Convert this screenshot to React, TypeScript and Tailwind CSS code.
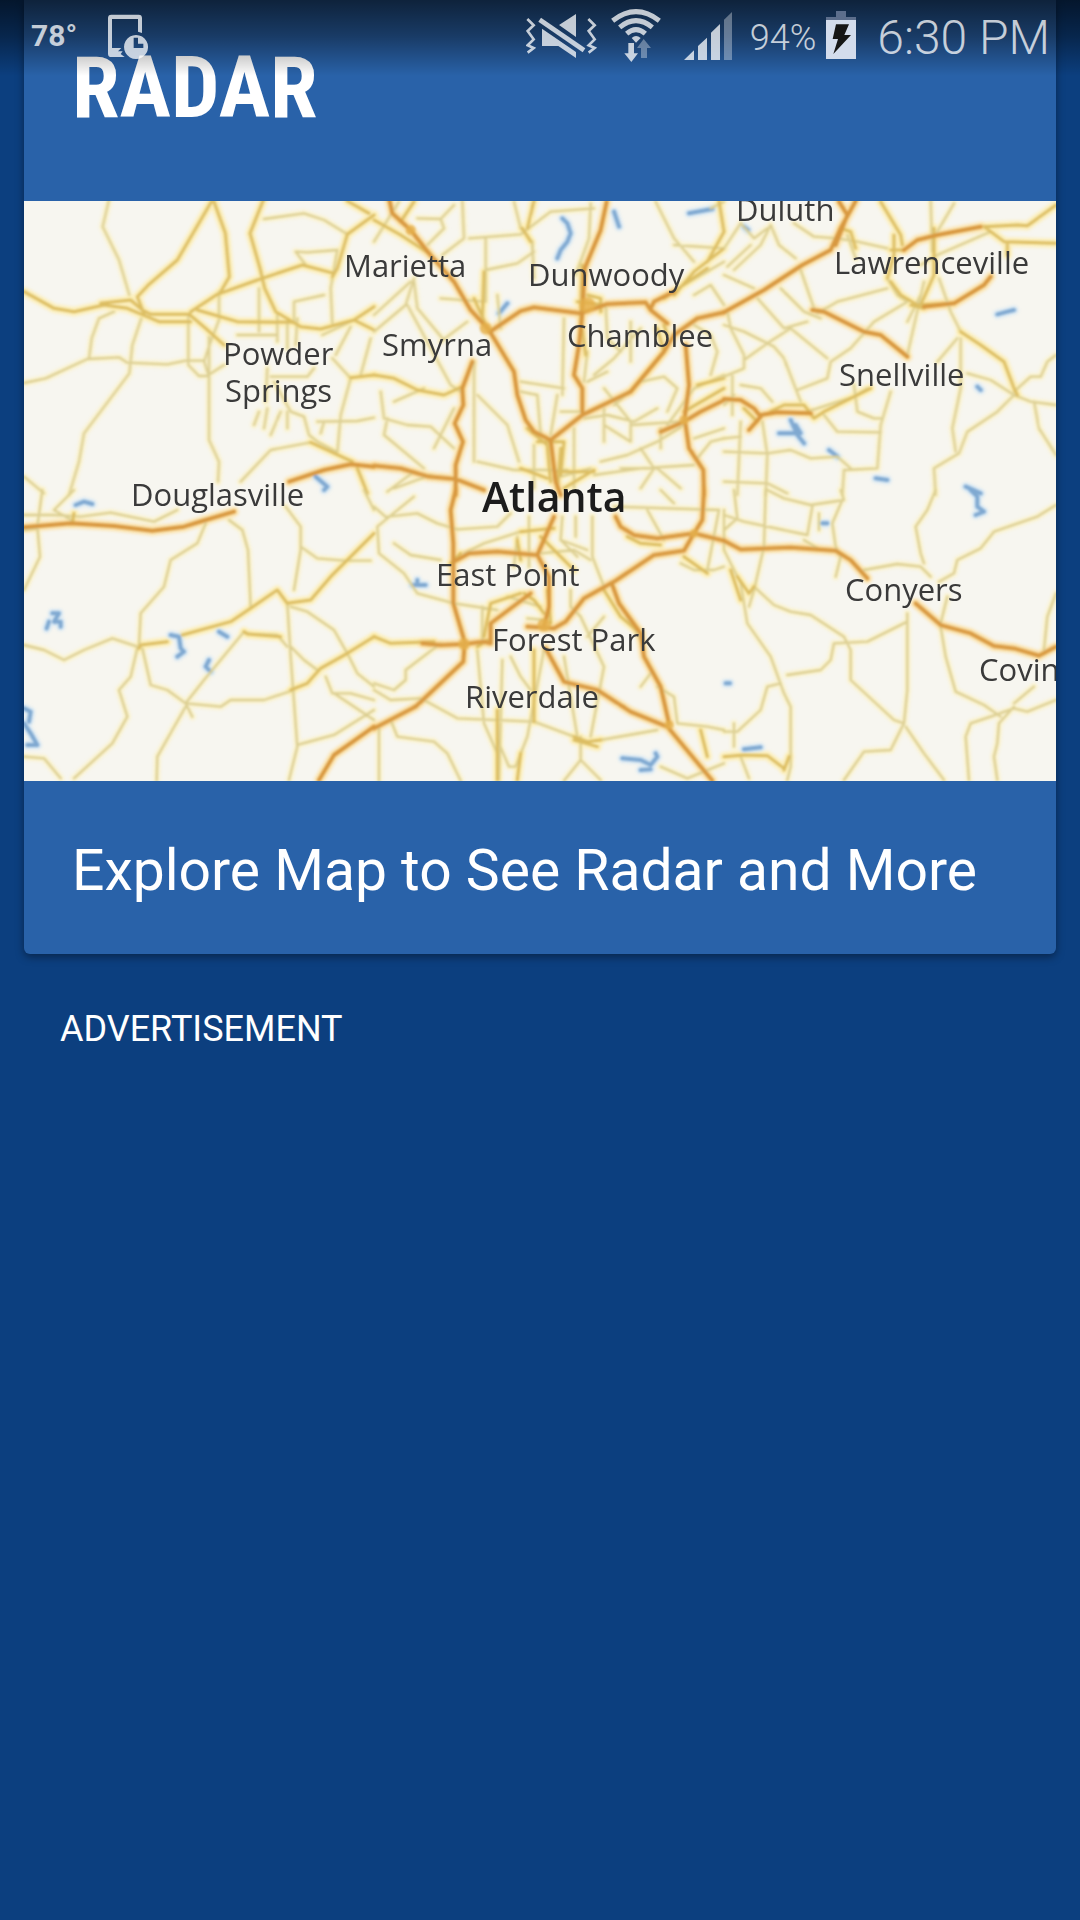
import React from "react";

const LIGHT = "#dccf92";
const GOLD = "#dcbd62";
const MAJOR = "#d8983f";
const WATER = "#7fa8d0";

type Tile = {
  x: number;
  y: number;
  light: string[];
  gold: string[];
  major: string[];
  water: string[];
};

const tiles: Tile[] = [
  {
    x: 0,
    y: 0,
    light: [
      "M256 10L236 95L285 195L316 300",
      "M0 564L65 550L190 492L285 487L310 503L430 508L485 497H540L553 540L600 510",
      "M270 350L225 370L203 430L195 490",
      "M352 370L325 450L316 535L180 715L165 800L135 900",
      "M555 425V735L585 800L582 860",
      "M493 360V510L525 543H555",
      "M720 72L840 55L900 75L970 118",
      "M815 170L850 172L940 165M815 170L845 210",
      "M705 280V410M760 360V440M790 370V460M820 370L815 450",
      "M810 385V320L900 300M640 420H760",
      "M0 845L60 895M650 860L740 765L860 742",
      "M840 665L855 720L880 740L940 772",
      "M940 165L920 280L925 385M895 420L990 375",
      "M925 490L980 550L950 660L940 772M880 680L1000 678L1050 668",
      "M730 640L720 700M705 650L690 690M770 650L740 720M790 650V700M730 520L725 620",
      "M740 545H850L870 520M750 560L800 650L840 665M900 680L890 715",
      "M980 395L935 480M1040 430L1010 540",
      "M585 375L560 440L540 500M585 290V370",
    ],
    gold: [
      "M562 20L460 195L375 268L340 305L362 362",
      "M570 20L604 115L616 245L590 290",
      "M718 15L678 115L708 220L722 280L755 350L830 395L890 402L990 375L1050 405",
      "M970 18L1035 55M1050 60L970 118L940 220L925 245",
      "M0 290L90 340L150 350L240 330L310 340L405 380H500",
      "M230 325L320 315L355 345L380 358H498",
      "M500 350L580 298L700 255L835 210L930 235",
      "M498 360L545 400L600 450M520 345L640 380L810 382",
      "M980 548L1050 540M990 375L1050 335",
      "M1000 820L1030 895M860 742L985 800",
    ],
    major: ["M795 860L900 825L980 808L1050 815"],
    water: ["M875 845L910 875L900 885"],
  },
  {
    x: 1050,
    y: 0,
    light: [
      "M265 18L270 130L205 180M0 140L75 20",
      "M130 70L200 72L240 30M160 150L210 100L200 72",
      "M285 130L440 118L530 50M420 20L440 100L475 140L480 250",
      "M335 130V320M335 225L430 205L480 170",
      "M530 50L660 40M650 25L645 130L605 240",
      "M845 20L900 130L960 200M900 150L1050 160M1010 40L1050 20",
      "M0 360L110 260M0 410L95 330L120 250M120 260L130 340L205 430",
      "M200 310L330 320M200 440L280 380M100 330L230 570L260 590",
      "M60 620L150 580M20 590L30 670L100 690L170 695L240 760",
      "M40 670L30 720L150 820M240 640L180 760",
      "M310 600L400 690L435 800M300 500V800M310 800L420 825H580",
      "M440 590L490 600L500 720M550 600L530 720M440 560L570 580",
      "M570 370L565 600M640 470L630 560M640 560L700 530M695 330L700 430L740 470",
      "M660 540L720 490L800 400M770 380V500",
      "M630 670L700 660L780 680L850 640M690 580L770 680L770 740L690 690M690 640V740",
      "M720 630L800 560L870 545L910 580L880 650M770 690L920 680",
      "M680 800L760 780L850 740L930 690M660 840L800 820L960 810",
      "M740 820L850 820L920 880M800 760L840 820L800 880",
      "M960 390L1010 420L1030 470L1010 540M1050 540L960 580L880 690",
      "M960 730L1050 700M970 790L1010 740L1050 730M860 700V760",
      "M560 650H620M540 850L650 820M600 700V880M480 750V880",
      "M930 270L1050 200M960 300L1010 270L1050 330",
      "M370 300L380 400M60 880L170 840M40 890L120 830",
    ],
    gold: [
      "M0 75L80 120L165 175M120 20L80 80",
      "M480 18L460 100M445 100L470 140",
      "M0 540L60 550L130 585L210 600L265 575",
      "M900 300L960 230L1050 160M870 310L1000 220",
      "M1035 18L1050 110L1000 200",
      "M300 310L340 400M330 230L325 370",
      "M625 210L620 370L635 480M640 300L680 310L680 350M610 320L690 330",
      "M850 400L870 470L770 590M870 390L880 420",
      "M460 700L520 750L530 860M490 740H570L560 840M560 760L550 880",
      "M970 570L1050 550M930 650L1050 580",
      "M440 820L520 850M550 830L660 830M570 880L660 825",
    ],
    major: [
      "M45 10L55 55L110 105L165 175L240 260L290 345L345 405L420 530L430 600L455 675L480 710L530 735L545 860L560 900",
      "M345 412L440 348L480 337L620 355L700 327L815 322L830 345L880 385",
      "M698 20L680 105L632 220L625 355L615 450L600 540L625 580V650",
      "M530 735L625 660L770 590L870 470L900 420L970 370L1050 352",
      "M295 500L265 580L268 630L242 685L267 740L245 810V900",
      "M0 812L80 820L165 845L245 852L330 885",
      "M935 450L945 570L932 670L945 760L988 825L990 900",
      "M860 710L930 680L980 650L1050 615M830 340L840 320L900 290",
    ],
    water: [
      "M565 70L580 85L590 115L580 140L560 165L550 190",
      "M720 50L735 95M945 55L1015 42M375 355L400 325",
    ],
  },
  {
    x: 2100,
    y: 0,
    light: [
      "M140 90L165 150L215 190M50 85L90 130L130 100M0 160L50 85",
      "M210 85L270 125L340 130L400 140L490 160",
      "M370 120L395 190M230 225L270 340M0 240L90 280",
      "M100 310L180 400L250 380M170 280L240 350L290 370",
      "M280 355L340 320L490 280M490 250L520 300L550 320L450 380L380 460L320 500L310 550L220 585",
      "M0 390L60 410L150 455L180 490L230 620",
      "M10 350L20 400L60 480L60 520L0 545M25 540V660",
      "M60 495L130 445L200 400L310 490",
      "M600 260L550 480M645 250L680 350L710 410",
      "M700 430L640 500M710 430V580L685 700L695 770",
      "M730 535L800 555L870 600M870 600L820 650L730 710L705 775L630 820L635 900",
      "M870 590L920 545L950 545L970 500L996 480M870 600L920 620L996 630",
      "M930 620L945 700L996 780M390 570L400 650L450 670H470",
      "M500 590L470 690L460 820L360 825L355 900",
      "M300 660L340 710L470 712M0 770L130 775L200 765L260 790L340 785L380 820",
      "M50 680L40 900M115 680L130 780L125 900M0 860L130 865L190 895",
      "M50 570L110 580L145 620M250 650L390 605L430 580M620 18L625 170",
      "M690 25L640 110M590 210L640 180L800 110M0 730L50 725",
      "M30 225L110 150L140 90M10 215L80 150M550 380L590 300M0 630L30 600",
    ],
    gold: [
      "M470 20L530 120L535 150M510 120L510 180L490 250",
      "M780 95L840 140L996 145M850 145V180",
      "M780 95L880 90L910 92L996 30",
      "M710 410L770 450L840 500L870 580L880 600",
      "M500 260L530 300L580 330L690 325",
      "M350 100L380 110L395 160M630 100V240L590 330",
      "M60 640L100 680M140 650L180 630H240L270 670L300 650L440 580",
      "M560 330L600 340M500 165H540",
    ],
    major: [
      "M395 18L350 100L320 165L235 210L120 285L0 352",
      "M345 20L370 60L335 150",
      "M540 165L580 135L640 120L770 95",
      "M800 245L780 270L690 325L600 335",
      "M265 345L300 350L420 410L470 420L550 485",
      "M0 612L50 615L90 640L110 665L75 705M110 660L160 652L260 655",
    ],
    water: [
      "M200 675L220 720L240 745M165 715L230 715L215 690",
      "M820 358L850 350L870 345M315 765L340 785M455 850L490 855",
      "M725 875L770 895M760 575L770 585M60 95L72 105",
    ],
  },
  {
    x: 0,
    y: 885,
    light: [
      "M55 0L40 110L48 200L0 300M150 0L90 60L150 95",
      "M0 75H90L170 80L260 68L390 95L460 60",
      "M545 100L520 160L440 210L420 290L350 370L345 470",
      "M615 90L655 120L672 180L680 350",
      "M785 50L830 110V180L810 300M830 170L880 205L960 212H1040",
      "M0 465L60 480L120 510L180 480L265 445L340 470",
      "M340 475L320 560L285 600L310 680L265 760L150 865",
      "M355 475L380 585L430 600L485 640L590 650L620 630L720 630L810 600",
      "M485 640L540 570L660 425L680 432L760 435L790 470",
      "M485 650L445 720L400 800L398 872M485 640L505 680",
      "M790 340L800 500L820 770L795 870",
      "M800 350L850 365L930 420L970 490L1000 550L1050 590",
      "M800 470L840 510L880 540M905 560L925 610L980 610L1050 630",
      "M820 765L930 735L1050 660M930 610L1050 690M0 800L60 805L110 865",
      "M1020 0L1050 60M0 120L40 115",
    ],
    gold: [
      "M475 435L620 395L680 355L760 300L790 340L860 330L920 260L1050 130",
      "M800 600L850 580L890 535L970 490L1050 440",
      "M345 475L350 465L430 455M660 425L670 432L770 440",
      "M150 70L145 100",
    ],
    major: [
      "M0 112L140 100L270 108L385 122L480 110L545 90L630 65",
      "M885 870L930 795L1050 710",
    ],
    water: [
      "M85 370H105L90 395H110V410M75 395L68 415",
      "M440 435L465 440L470 475L480 485L460 500",
      "M0 655L20 665L15 695M0 700L20 730L40 765H10",
      "M555 510L545 530L560 545M155 45L180 35L205 42M585 425L610 440",
    ],
  },
  {
    x: 1050,
    y: 885,
    light: [
      "M0 50L40 85L10 110L15 190L90 250L130 310L240 340L370 360",
      "M40 85L120 20M40 80L130 70L190 100L250 118L370 110L410 70",
      "M60 160L110 195L200 210M270 190L330 160L440 125",
      "M0 580L60 600L95 570V540L200 460",
      "M0 600L50 630L140 625L250 685L480 695L600 740",
      "M50 690L70 740L180 755L220 790L260 872M15 710V872",
      "M310 480L330 700L370 790M385 510L375 870M325 350V460",
      "M370 750L405 830H425L460 740L510 480",
      "M410 500L440 560L470 600M570 500L610 740",
      "M590 300V350L620 380L690 530L650 740M690 380L640 440",
      "M655 80V200L690 290M565 80L560 150L640 180M605 80V140",
      "M430 140L420 230M465 80V230M500 190L600 180L650 210",
      "M620 740V810L570 872M620 810L680 870M680 750L850 720",
      "M850 590L900 620L910 700L1000 710L1050 720",
      "M720 50L1035 60M820 60L870 150M860 0L900 40",
      "M1035 60L1000 240M920 220L960 240H1020L1050 230M1050 60V180",
      "M860 830L940 865L1050 820M800 590L830 550M800 450L760 380",
      "M460 385L510 390M400 320L500 350M560 150L610 200",
    ],
    gold: [
      "M440 125L540 115M500 140L600 240M430 150L440 210",
      "M260 190L230 220M450 310L480 330L510 370",
      "M520 300L530 400M330 440L350 340L440 310",
      "M600 740L640 755L680 750M600 750L670 770M480 695V480",
      "M690 300L740 380L800 430M370 870V660M430 870L440 790",
      "M310 470L340 450M930 200L1000 250M0 440L50 460L180 455",
      "M760 140L800 160L860 165M980 720L1000 800",
    ],
    major: [
      "M245 0L230 60L238 160V340L272 455",
      "M240 215L285 190L370 185L490 195L540 80",
      "M490 195L525 260L525 350L510 410",
      "M725 80L740 110L780 135L850 145L960 130L1050 152",
      "M990 0L985 90L960 130L930 182L840 195L720 275L630 325L575 395L540 415L460 410",
      "M715 285L735 340L800 430L810 500L860 590L885 700",
      "M145 460L200 465L270 462L330 455L350 460V400L470 310",
      "M272 460L268 515L125 650L0 715",
      "M515 475L570 575L670 600L770 665L880 710L1015 872",
    ],
    water: [
      "M745 805L800 810L830 825L850 800L845 790M800 840L830 838",
      "M115 285H155M130 270V285",
    ],
  },
  {
    x: 2100,
    y: 885,
    light: [
      "M30 0L40 85L0 120M125 0L120 170L90 300L75 350",
      "M130 0L180 25L260 45L360 30L350 0M0 75L60 95L250 135L265 50",
      "M355 30L325 100L335 170L350 200L335 260",
      "M635 0L610 60L575 110L590 190L600 220",
      "M420 240L520 222L590 230L620 260",
      "M90 290L150 345L200 365L260 375L360 440L380 480V570L510 690L540 700",
      "M550 370L550 600L540 700L500 780L420 785L360 870",
      "M545 710L600 790L660 870M550 395L430 455L330 460L320 510L290 540L190 555",
      "M0 180L50 280L70 400L140 500L180 610L200 650V830L190 870",
      "M170 580L130 590L110 660L40 725H0",
      "M650 410L665 500L695 605L780 645L830 680",
      "M996 630L910 665L870 655L800 680L740 700L725 740L735 870",
      "M870 650L825 700L820 760L810 800L820 870M870 640L930 590",
      "M996 45L940 80L810 125L770 175L700 210L690 250L645 275",
      "M996 310L970 380L960 480M670 320L650 400M30 700L30 770M50 800L75 865",
      "M285 120V70M240 150L280 175",
    ],
    gold: [
      "M40 260L75 310L90 290M0 800L60 795L130 797L180 835",
      "M20 240L50 330M180 840L195 800",
    ],
    major: [
      "M0 152L50 178L200 172L335 182L380 210L430 265",
      "M575 340L650 405L740 430L810 468L870 475L945 497L996 470",
    ],
    water: [
      "M740 0L760 20V50L780 65L755 75M295 100H310",
      "M5 580H18M60 778L110 772",
    ],
  },
];

const cities: { name: string; x: number; y: number; bold?: boolean }[] = [
  { name: "Duluth", x: 736, y: 221 },
  { name: "Marietta", x: 344, y: 277 },
  { name: "Dunwoody", x: 528, y: 286 },
  { name: "Lawrenceville", x: 834, y: 274 },
  { name: "Chamblee", x: 567, y: 347 },
  { name: "Smyrna", x: 382, y: 356 },
  { name: "Powder", x: 223, y: 365 },
  { name: "Springs", x: 225, y: 402 },
  { name: "Snellville", x: 839, y: 386 },
  { name: "Douglasville", x: 131, y: 506 },
  { name: "Atlanta", x: 482, y: 512, bold: true },
  { name: "East Point", x: 436, y: 586 },
  { name: "Conyers", x: 845, y: 601 },
  { name: "Forest Park", x: 492, y: 651 },
  { name: "Covin", x: 979, y: 681 },
  { name: "Riverdale", x: 465, y: 708 },
];

function RadarMap() {
  return (
    <svg
      viewBox="24 201 1032 580"
      className="block w-full bg-[#f7f6f0]"
      role="img"
      aria-label="Map of the Atlanta area"
    >
      <defs>
        <filter id="glow" x="-5%" y="-5%" width="110%" height="110%">
          <feGaussianBlur stdDeviation="5" />
        </filter>
        <filter id="soft" x="-5%" y="-5%" width="110%" height="110%">
          <feGaussianBlur stdDeviation="2.5" />
        </filter>
      </defs>
      <g transform="translate(24 195) scale(0.33333)" fill="none" strokeLinejoin="round" strokeLinecap="round">
        <g filter="url(#glow)">
          {tiles.map((t) => (
            <g key={`h${t.x}-${t.y}`} transform={`translate(${t.x} ${t.y})`}>
              <path d={t.light.join("")} stroke="#fcf2c4" strokeWidth={22} opacity={0.7} />
              <path d={t.gold.join("")} stroke="#fdeca6" strokeWidth={28} opacity={0.7} />
              <path d={t.major.join("")} stroke="#fde0a0" strokeWidth={30} opacity={0.8} />
              <path d={t.water.join("")} stroke="#cfe5f5" strokeWidth={26} opacity={0.8} />
            </g>
          ))}
        </g>
        <g filter="url(#soft)">
          {tiles.map((t) => (
            <g key={`r${t.x}-${t.y}`} transform={`translate(${t.x} ${t.y})`}>
              <path d={t.water.join("")} stroke={WATER} strokeWidth={12} />
              <path d={t.light.join("")} stroke={LIGHT} strokeWidth={7} />
              <path d={t.gold.join("")} stroke={GOLD} strokeWidth={9} />
            </g>
          ))}
          {tiles.map((t) => (
            <path
              key={`m${t.x}-${t.y}`}
              transform={`translate(${t.x} ${t.y})`}
              d={t.major.join("")}
              stroke={MAJOR}
              strokeWidth={12}
            />
          ))}
          <g fill="#e5b04c" opacity={0.8}>
            <circle cx={1160} cy={105} r={15} />
            <circle cx={1385} cy={400} r={18} />
            <circle cx={1690} cy={330} r={24} />
            <circle cx={1320} cy={1347} r={18} />
            <circle cx={1560} cy={1290} r={20} />
            <circle cx={1935} cy={1590} r={14} />
            <circle cx={2010} cy={1015} r={13} />
            <circle cx={1980} cy={675} r={14} />
          </g>
        </g>
      </g>
      {cities.map((c) => (
        <text
          key={c.name}
          x={c.x}
          y={c.y}
          className={
            c.bold
              ? "fill-[#1c1c1c] font-['Open_Sans','Noto_Sans',sans-serif] text-[41px] font-semibold"
              : "fill-[#3a3a3a] font-['Open_Sans','Noto_Sans',sans-serif] text-[31px]"
          }
        >
          {c.name}
        </text>
      ))}
    </svg>
  );
}

function StatusBar() {
  return (
    <header className="absolute inset-x-0 top-0 flex h-20 justify-between bg-linear-to-b from-black/65 via-black/40 via-45% to-transparent to-95% pr-[30px] pl-[31px] text-white/75">
      <div className="flex">
        <span className="w-[77px] pt-[18px] text-[30px] leading-9 font-bold">78°</span>
        <svg viewBox="324 0 120 240" className="h-20 w-10" fill="currentColor" aria-hidden="true">
          <path d="M334 44H416Q426 44 426 54V99L414 95V57H336V144H364L354 154H368L362 162L374 171H334Q324 171 324 161V54Q324 44 334 44Z" />
          <path
            d="M408 105a36 36 0 1 0 .1 0ZM401 113H414V131H430V144H401Z"
            fillRule="evenodd"
          />
        </svg>
      </div>
      <div className="flex">
        <svg viewBox="75 0 213 240" className="mr-3.5 h-20 w-[71px]" fill="currentColor" aria-hidden="true">
          <path
            d="M79 57L98 76L80 93L98 118L80 136L98 144L80 158M262 57L281 76L263 93L281 118L263 136L281 144L263 158"
            fill="none"
            stroke="currentColor"
            strokeWidth={8}
          />
          <path d="M120 53L253 145L245 157L112 65Z" />
          <path d="M225 42V111L174 75ZM123 86L225 156V174L172 138H123Z" />
        </svg>
        <svg viewBox="330 0 150 240" className="mr-[23px] h-20 w-[50px]" fill="currentColor" aria-hidden="true">
          <g fill="none" stroke="currentColor" strokeWidth={15}>
            <path d="M335 62Q405 8 475 62" />
            <path d="M356 82Q405 42 454 82" />
            <path d="M377 101Q405 77 433 101" />
          </g>
          <path d="M392 114Q405 102 419 114L405 128Z" />
          <path d="M382 129H399V160H411L391 186L370 160H382Z" />
          <path d="M428 117L450 144H438V174H420V144H408Z" opacity={0.45} />
        </svg>
        <svg viewBox="549 0 144 240" className="mr-[18px] h-20 w-12" fill="currentColor" aria-hidden="true">
          <path d="M549 180L579 151V180ZM591 180V138L618 113V180ZM630 180V98L657 72V180Z" />
          <path d="M669 180V59L693 36V180Z" opacity={0.45} />
        </svg>
        <span className="mr-2.5 pt-4 text-[36px] leading-11 font-light">94%</span>
        <svg viewBox="105 0 90 240" className="mr-[21px] h-20 w-[30px]" aria-hidden="true">
          <path d="M135 33H165V51H195V60H105V51H135Z" fill="#5c6e8c" />
          <path d="M105 60H195V177H105Z" fill="#d3dcec" />
          <path d="M135 73H174L160 105H180L127 162L141 117H125Z" fill="#161616" />
        </svg>
        <time className="pt-2.5 text-[48px] leading-14 font-light">6:30 PM</time>
      </div>
    </header>
  );
}

export default function App() {
  return (
    <div className="relative min-h-screen bg-[#0c3f7f] font-[Roboto,sans-serif] text-white">
      <main className="px-6">
        <section className="overflow-hidden rounded-b-md bg-[#2962a9] shadow-[0_3px_9px_rgba(0,0,0,0.4)]">
          <h1 className="h-[201px] px-12 pt-[38px] font-['Roboto_Condensed','Liberation_Sans_Narrow',Roboto,sans-serif] text-[86px] leading-[100px] font-bold">
            RADAR
          </h1>
          <RadarMap />
          <a href="#map" className="block px-12 pt-[54px] pb-[47px] text-[57px] leading-[72px]">
            Explore Map to See Radar and More
          </a>
        </section>
        <p className="px-9 pt-[53px] text-[36px] leading-11">ADVERTISEMENT</p>
      </main>
      <StatusBar />
    </div>
  );
}
